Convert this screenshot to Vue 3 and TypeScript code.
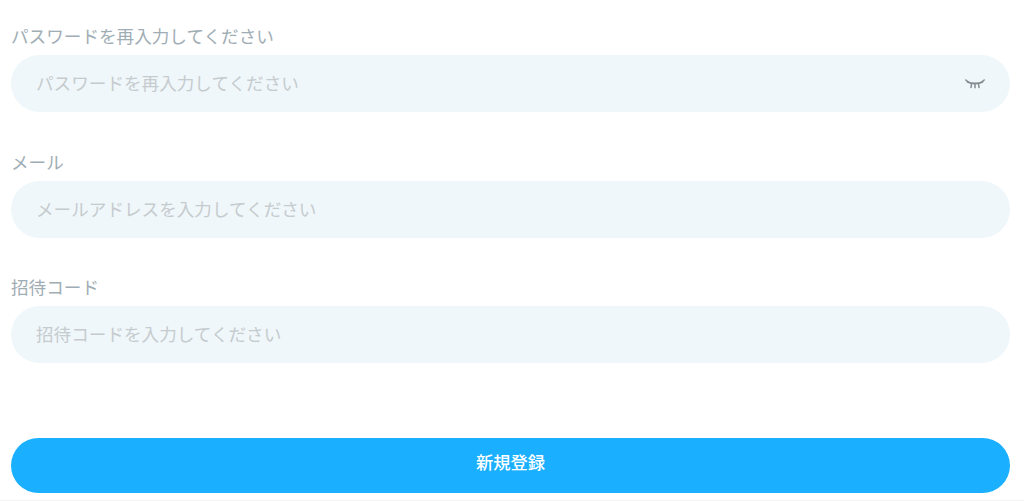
<script setup lang="ts">
interface Field {
  label: string;
  placeholder: string;
  eye?: boolean;
}

const fields: Field[] = [
  { label: "パスワードを再入力してください", placeholder: "パスワードを再入力してください", eye: true },
  { label: "メール", placeholder: "メールアドレスを入力してください" },
  { label: "招待コード", placeholder: "招待コードを入力してください" },
];
</script>

<template>
  <main class="page">
    <form class="form" @submit.prevent>
      <div v-for="f in fields" :key="f.label" class="field">
        <label class="label">{{ f.label }}</label>
        <div class="box">
          <span class="placeholder">{{ f.placeholder }}</span>
          <svg v-if="f.eye" class="eye" viewBox="0 0 20 10" width="20" height="10" fill="none" stroke="#858d92" stroke-width="1.500" stroke-linecap="round">
            <path d="M2.500 3C6.500 5 13.500 5 17.500 3" stroke-width="1.800" />
            <path d="M0.800 1L3.500 3.200" />
            <path d="M19.200 1L16.500 3.200" />
            <path d="M6.500 5L6 8.500" />
            <path d="M10 5V8.800" />
            <path d="M13.500 5L14 8.500" />
          </svg>
        </div>
      </div>
      <button class="submit" type="button">新規登録</button>
    </form>
  </main>
</template>

<style scoped>
.page {
  width: 1024px;
  height: 501px;
  box-sizing: border-box;
  border-bottom: 1px solid #f3f3f3;
  background: #fff;
  font-family: "Noto Sans CJK JP", "Noto Sans", sans-serif;
  overflow: hidden;
}
.form {
  display: flex;
  flex-direction: column;
  padding: 24px 14px 0 11px;
}
.field {
  display: flex;
  flex-direction: column;
  margin-bottom: 37.500px;
}
.label {
  height: 31px;
  line-height: 24px;
  font-size: 17.600px;
  color: #9fadb5;
}
.box {
  height: 57px;
  border-radius: 28.500px;
  background: #eff7fa;
  display: flex;
  align-items: center;
  justify-content: space-between;
  padding: 0 25px 2px 25px;
  box-sizing: border-box;
}
.eye {
  margin-top: 3px;
}
.placeholder {
  font-size: 17.600px;
  color: #c6cbce;
}
.submit {
  margin-top: 37.500px;
  height: 55px;
  border: 0;
  border-radius: 27.500px;
  background: #1ab0ff;
  color: #fff;
  font-family: inherit;
  font-size: 17.300px;
  font-weight: 500;
  padding: 0 0 9px;
}
</style>
